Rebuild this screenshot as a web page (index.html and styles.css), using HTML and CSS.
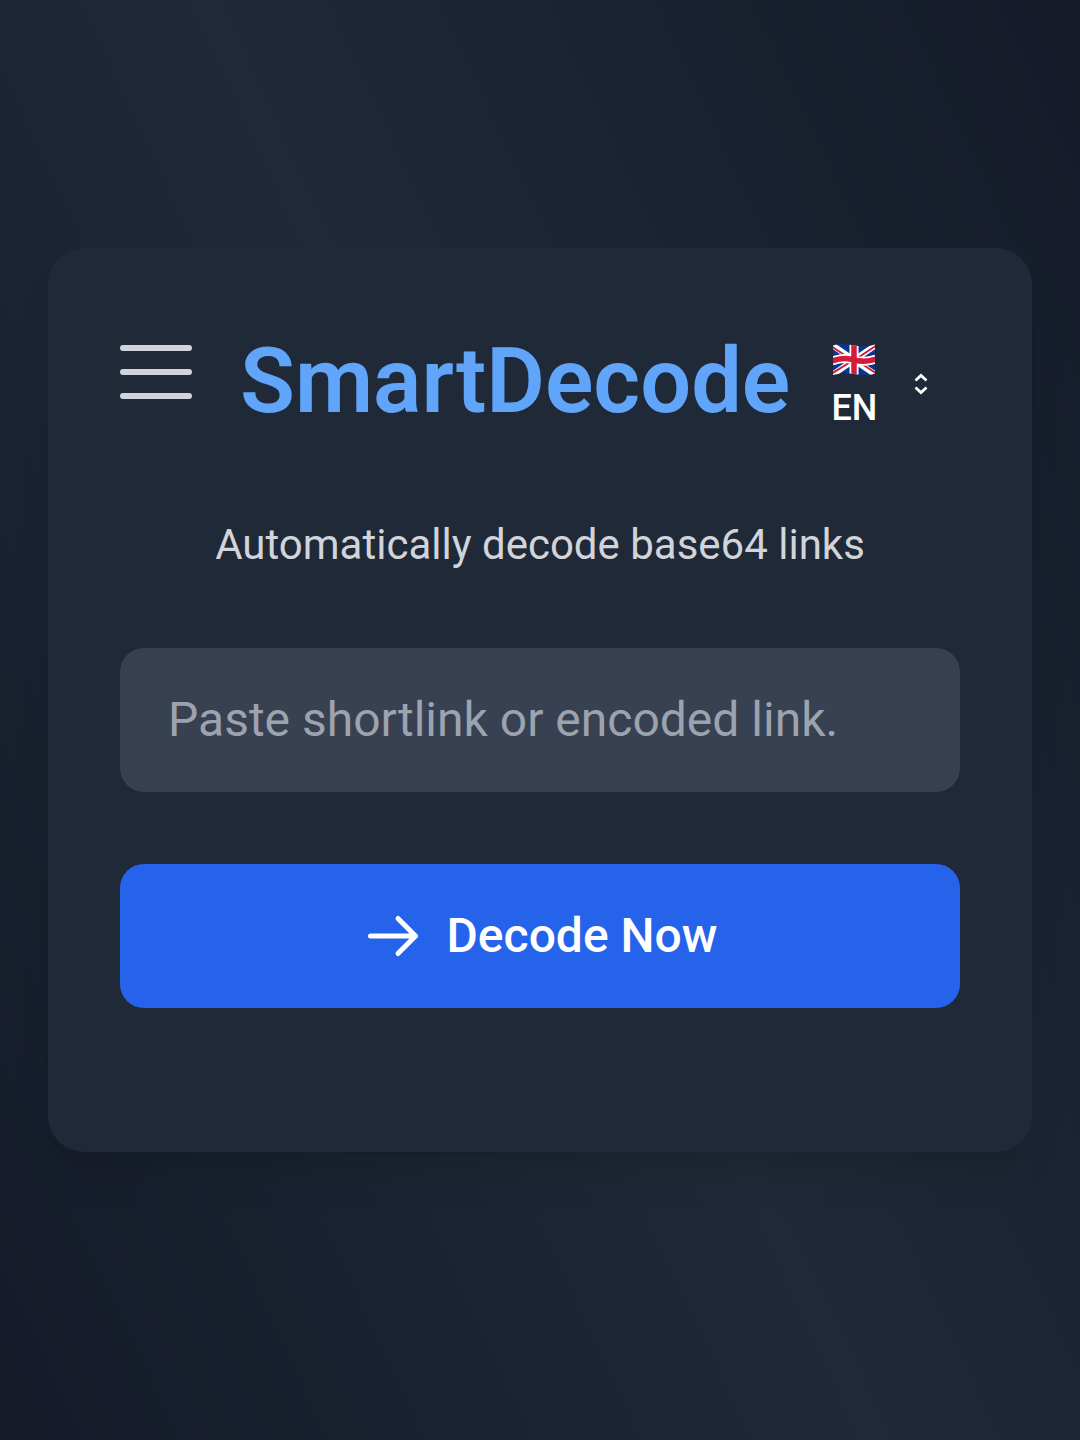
FILE: index.html
```html
<!DOCTYPE html>
<html lang="en">
<head>
<meta charset="utf-8">
<title>SmartDecode</title>
<link rel="stylesheet" href="styles.css">
</head>
<body>
<main class="card">
  <header class="header">
    <button class="menu" aria-label="Menu"><span class="bar"></span><span class="bar"></span><span class="bar"></span></button>
    <h1 class="title">SmartDecode</h1>
    <button class="language">
      <span class="label">
        <svg class="flag" viewBox="0 0 44 32" aria-hidden="true">
          <defs><clipPath id="wave"><path d="M1 1.500C9-.5 16 .5 22 1.500S36 3 43 .5V29.500C36 32 29 31 22 30S9 29 1 31Z"/></clipPath></defs>
          <g clip-path="url(#wave)">
            <path fill="#07378f" d="M0 0h44v32H0z"/>
            <path stroke="#fff" stroke-width="6" d="M0 1L44 31M0 31L44 1"/>
            <path stroke="#d51b38" stroke-width="2" d="M-1 2L20 16M24 16L45 30M-1 30L20 17M24 15L45 1"/>
            <path fill="none" stroke="#fff" stroke-width="9" d="M22 0V32M0 17C12 13 16 14.500 22 16S34 18.500 44 15"/>
            <path fill="none" stroke="#d51b38" stroke-width="5.500" d="M22 0V32M0 17C12 13 16 14.500 22 16S34 18.500 44 15"/>
          </g>
        </svg>
        <span class="code">EN</span>
      </span>
      <svg class="chevrons" viewBox="0 0 14 22" aria-hidden="true"><path d="M1.500 7.500L7 2.500L12.500 7.500M1.500 14.500L7 19.500L12.500 14.500"/></svg>
    </button>
  </header>
  <p class="subtitle">Automatically decode base64 links</p>
  <input class="field" type="text" placeholder="Paste shortlink or encoded link.">
  <button class="submit">
    <svg class="arrow" viewBox="0 0 24 24" aria-hidden="true"><path d="M14 5L21 12L14 19M21 12H3"/></svg>
    <span class="submit-text">Decode Now</span>
  </button>
</main>
</body>
</html>
```
FILE: styles.css
```css
* { box-sizing: border-box; margin: 0; padding: 0; }
body {
  height: 1440px;
  padding: 248px 48px 0;
  background: linear-gradient(65deg, #151a29, #192230 25%, #202937 50%, #192230 75%, #151a29);
  font-family: Roboto, "Liberation Sans", sans-serif;
  overflow: hidden;
}
button { border: 0; background: none; font: inherit; color: inherit; }
.card {
  height: 904px;
  padding: 72px;
  display: flex;
  flex-direction: column;
  border-radius: 36px;
  background: #202937;
  box-shadow: 0 30px 45px -9px rgba(0, 0, 0, .08), 0 12px 18px -12px rgba(0, 0, 0, .1);
}
.header { height: 120px; display: flex; align-items: center; }
.menu { width: 72px; height: 54px; margin: -16px 48px 0 0; display: flex; flex-direction: column; justify-content: space-between; }
.bar { height: 6px; border-radius: 3px; background: #d1d5db; }
.title { width: 552px; margin-top: 4px; font-size: 90px; line-height: 120px; font-weight: 600; color: #60a5fa; white-space: nowrap; }
.language { display: flex; align-items: center; gap: 37px; margin: 8px 0 0 39.5px; color: #fff; }
.label { display: flex; flex-direction: column; align-items: center; padding-top: 8px; }
.flag { width: 44px; height: 32px; margin-bottom: 8px; }
.code { font-size: 36px; line-height: 48px; font-weight: 500; }
.chevrons { width: 14px; height: 22px; fill: none; stroke: #fff; stroke-width: 2.8; }
.subtitle { margin-top: 72px; font-size: 42px; line-height: 66px; text-align: center; color: #d1d5db; }
.field { height: 144px; margin-top: 70px; padding: 0 48px 2px; border: 0; border-radius: 24px; background: #384152; font: 400 48px/72px Roboto, "Liberation Sans", sans-serif; color: #fff; flex-shrink: 0; }
.field::placeholder { color: #9ca3af; opacity: 1; }
.submit { height: 144px; margin-top: 72px; display: flex; align-items: center; justify-content: center; gap: 24px; border-radius: 24px; background: #2563eb; color: #fff; font-size: 48px; font-weight: 500; flex-shrink: 0; }
.submit-text { padding-bottom: 2px; }
.arrow { width: 60px; height: 60px; fill: none; stroke: #fff; stroke-width: 2; stroke-linecap: round; stroke-linejoin: round; }
```
